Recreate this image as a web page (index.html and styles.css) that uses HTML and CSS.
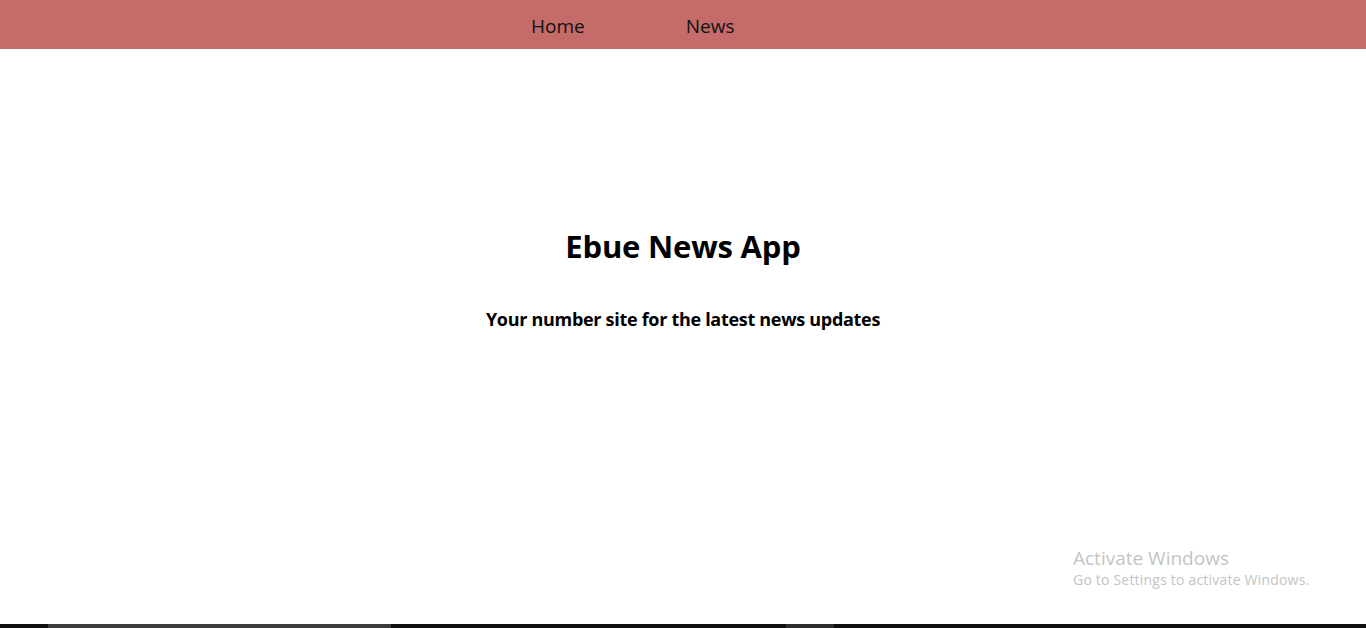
FILE: index.html
```html
<!DOCTYPE html>
<html lang="en">
<head>
<meta charset="utf-8">
<title>Ebue News App</title>
<link rel="stylesheet" href="styles.css">
</head>
<body>
<div class="page">
  <nav class="nav">
    <a class="nav-link" href="#">Home</a>
    <a class="nav-link" href="#">News</a>
  </nav>
  <main class="hero">
    <h1 class="title">Ebue News App</h1>
    <p class="subtitle">Your number site for the latest news updates</p>
  </main>
  <div class="taskbar">
    <span class="tb-seg tb-a"></span>
    <span class="tb-seg tb-b"></span>
    <span class="tb-seg tb-c"></span>
    <span class="tb-seg tb-d"></span>
  </div>
  <div class="watermark">
    <div class="wm-title">Activate Windows</div>
    <div class="wm-sub">Go to Settings to activate Windows.</div>
  </div>
</div>
</body>
</html>
```
FILE: styles.css
```css
* { box-sizing: border-box; }
html, body { margin: 0; padding: 0; }
body {
  font-family: "Open Sans", "Noto Sans", sans-serif;
  color: #000;
  background: #fff;
}
.page {
  position: relative;
  height: 628px;
  display: flex;
  flex-direction: column;
  overflow: hidden;
}
.nav {
  height: 49px;
  flex: none;
  background: #c56c6b;
  display: flex;
  align-items: center;
  padding-left: 531px;
  padding-top: 4px;
  gap: 101px;
}
.nav-link {
  color: #111;
  text-decoration: none;
  font-size: 19px;
  letter-spacing: 0;
  line-height: 1;
}
.hero {
  flex: 1;
  display: flex;
  flex-direction: column;
  align-items: center;
  padding-top: 175px;
}
.title {
  margin: 0;
  font-size: 31px;
  font-weight: 700;
  letter-spacing: -0.2px;
  line-height: 44px;
}
.subtitle {
  margin: 39px 0 0;
  font-size: 18px;
  font-weight: 700;
  letter-spacing: -0.3px;
  line-height: 24px;
}
.taskbar {
  height: 4px;
  flex: none;
  background: #101010;
  display: flex;
}
.tb-seg { display: block; height: 4px; }
.tb-a { width: 48px; }
.tb-b { width: 343px; background: #3c3c3c; }
.tb-c { width: 395px; }
.tb-d { width: 48px; background: #2e2e2e; }
.watermark {
  position: absolute;
  left: 1073px;
  top: 546px;
  color: #c4c4c4;
}
.wm-title { font-size: 19px; line-height: 24px; letter-spacing: 0; }
.wm-sub { font-size: 14px; line-height: 20px; letter-spacing: 0.2px; }
```
